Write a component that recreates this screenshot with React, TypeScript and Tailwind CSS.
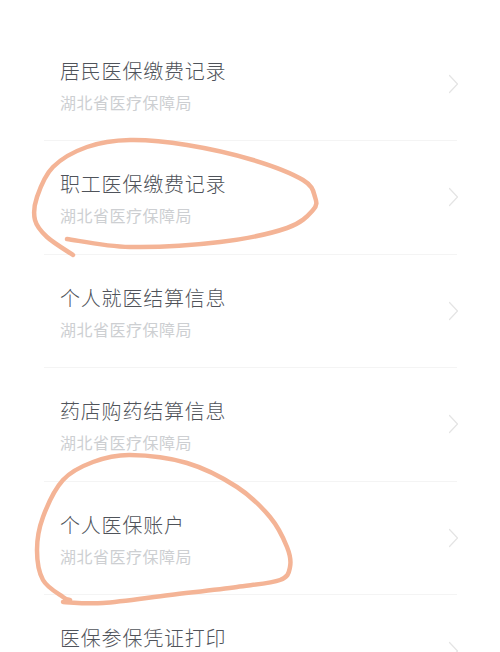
const rows = [
  "居民医保缴费记录",
  "职工医保缴费记录",
  "个人就医结算信息",
  "药店购药结算信息",
  "个人医保账户",
  "医保参保凭证打印",
];

// hand drawn circles, traced from the screenshot
const loopA: [number, number][] = [
  [67, 239], [130, 247], [220, 242], [287, 228], [313, 210], [315, 197],
  [303, 180], [253, 160], [187, 145], [130, 140], [87, 147], [53, 167],
  [37, 197], [35, 220], [47, 237], [73, 255],
];
const loopB: [number, number][] = [
  [63, 602], [103, 603], [170, 595], [237, 587], [280, 580], [290, 567],
  [287, 547], [270, 517], [237, 487], [187, 463], [130, 455], [93, 462],
  [63, 480], [43, 517], [37, 550], [43, 580], [63, 597], [70, 600],
];

function smooth(pts: [number, number][]) {
  let d = `M${pts[0][0]},${pts[0][1]}`;
  for (let i = 0; i < pts.length - 1; i++) {
    const p0 = pts[i - 1] || pts[i];
    const p1 = pts[i];
    const p2 = pts[i + 1];
    const p3 = pts[i + 2] || p2;
    const c1x = p1[0] + (p2[0] - p0[0]) / 6;
    const c1y = p1[1] + (p2[1] - p0[1]) / 6;
    const c2x = p2[0] - (p3[0] - p1[0]) / 6;
    const c2y = p2[1] - (p3[1] - p1[1]) / 6;
    d += ` C${c1x},${c1y} ${c2x},${c2y} ${p2[0]},${p2[1]}`;
  }
  return d;
}

function Chevron() {
  return (
    <svg width="11" height="20" viewBox="0 0 11 20" fill="none" className="-mr-[2px]">
      <path d="M1.5 1.5 L9.5 10 L1.5 18.5" stroke="#e4e4e4" strokeWidth="1.2" strokeLinecap="round" strokeLinejoin="round" />
    </svg>
  );
}

export default function App() {
  return (
    <div
      className="relative w-[500px] h-[652px] overflow-hidden bg-white"
      style={{ fontFamily: '"Noto Sans CJK SC", "Noto Sans", sans-serif' }}
    >
      <div className="pt-[27.5px] ml-[44px] mr-[43px]">
        {rows.map((title) => (
          <div key={title} className="flex items-center justify-between h-[113.5px] border-b border-[#f4f4f4] pl-[16px]">
            <div className="flex flex-col gap-[5px] pt-[3px]">
              <div className="text-[20px] leading-[28px] tracking-[0.8px] font-light text-[#4f535a]">{title}</div>
              <div className="text-[16px] leading-[24px] tracking-[0.5px] text-[#cdcfd2]">湖北省医疗保障局</div>
            </div>
            <Chevron />
          </div>
        ))}
      </div>
      <svg className="absolute inset-0 pointer-events-none" width="500" height="652" viewBox="0 0 500 652" fill="none">
        <path d={smooth(loopA)} stroke="#f4b496" strokeWidth="4.5" strokeLinecap="round" strokeLinejoin="round" />
        <path d={smooth(loopB)} stroke="#f4b496" strokeWidth="4.5" strokeLinecap="round" strokeLinejoin="round" />
      </svg>
    </div>
  );
}
